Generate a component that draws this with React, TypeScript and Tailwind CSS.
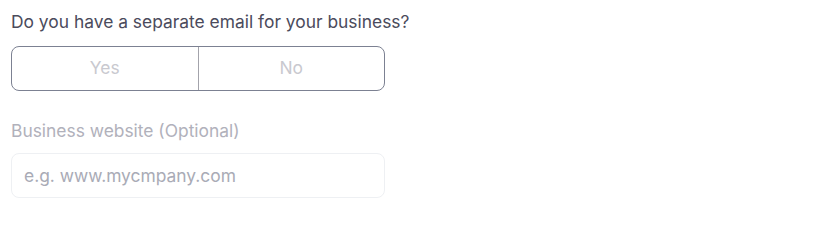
export default function App() {
  return (
    <div className="min-h-screen bg-white pl-[11px] pt-[11px] font-['Inter',sans-serif]">
      <div className="w-[374px]">
        <p className="whitespace-nowrap text-[17.4px] leading-[22px] text-[#4b4b5c]">
          Do you have a separate email for your business?
        </p>
        <div className="mt-[13px] flex h-[45px] overflow-hidden rounded-[8px] border border-[#7c8192]">
          <button className="flex-1 text-[17.4px] text-[#c9c9cf]">Yes</button>
          <div className="w-px bg-[#a3a3ab]" />
          <button className="flex-1 text-[17.4px] text-[#c9c9cf]">No</button>
        </div>
        <p className="mt-[29px] whitespace-nowrap text-[17.4px] leading-[22px] text-[#b1b1bb]">
          Business website (Optional)
        </p>
        <input
          className="mt-[11px] h-[45px] w-full rounded-[8px] border border-[#eef0f3] px-[12px] text-[17.4px] outline-none placeholder:text-[#a9abb6]"
          placeholder="e.g. www.mycmpany.com"
        />
      </div>
    </div>
  );
}
